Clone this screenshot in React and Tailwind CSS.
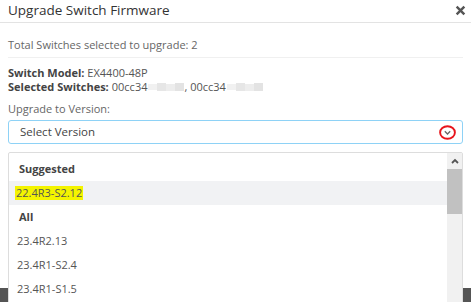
import { useState } from "react";

const versions = ["23.4R2.13", "23.4R1-S2.4", "23.4R1-S1.5"];

// pixelated blur placeholder for hidden serials
const Blur = () => (
  <span className="inline-flex items-center h-[8px] ml-[1px]">
    <span className="w-[9px] h-[6px] bg-[#f1f1f1]"></span>
    <span className="w-[9px] h-[8px] bg-[#e6e6e6]"></span>
    <span className="w-[9px] h-[7px] bg-[#ededed]"></span>
    <span className="w-[9px] h-[8px] bg-[#e3e3e3]"></span>
  </span>
);

const App = () => {
  const [open] = useState(true);

  return (
    <div
      className="relative w-[471px] h-[302px] overflow-hidden bg-white text-[#555]"
      style={{ fontFamily: "'Open Sans', 'Liberation Sans', sans-serif" }}
    >
      {/* HEADER */}
      <div className="flex items-center justify-between h-[23px] pl-[8px] pr-[5px] border-b border-[#e3e3e3]">
        <h2 className="text-[13.5px] leading-none text-[#333] -mt-[1px]">
          Upgrade Switch Firmware
        </h2>
        <svg width="11" height="11" viewBox="0 0 10 10" className="-mt-[1px]">
          <path d="M1.5 1.5 L8.5 8.5 M8.5 1.5 L1.5 8.5" stroke="#555" strokeWidth="2.2" />
        </svg>
      </div>

      {/* BODY */}
      <div className="px-[8px]">
        <p className="text-[11px] leading-none pt-[16px] pb-[7px] border-b border-[#f0f0f0] text-[#666]">
          Total Switches selected to upgrade: 2
        </p>
        <div className="text-[11px] leading-[14px] pt-[8px]">
          <p>
            <span className="font-bold text-[#444]">Switch Model:</span> EX4400-48P
          </p>
          <p className="flex items-center">
            <span className="font-bold text-[#444] mr-[3px]">Selected Switches:</span>
            00cc34
            <Blur />
            , 00cc34
            <Blur />
          </p>
        </div>
        <p className="text-[11px] leading-none pt-[9px] pb-[6px] text-[#666]">Upgrade to Version:</p>
        <div className="flex items-center justify-between h-[24px] border border-[#8ed2f6] rounded-[3px] pl-[11px] pr-[6px]">
          <span className="text-[11.5px] text-[#444]">Select Version</span>
          <svg width="17" height="15" viewBox="0 0 17 15">
            <ellipse cx="8.5" cy="7.5" rx="7.4" ry="6.3" fill="none" stroke="#e8141b" strokeWidth="1.9" />
            <path d="M5.8 6.3 L8.5 9 L11.2 6.3" fill="none" stroke="#666" strokeWidth="1.3" />
          </svg>
        </div>
        <div className="mt-[98px] border-t border-[#eeeeee]"></div>
      </div>
      <div className="mt-[45px] h-[20px] bg-[#555]"></div>

      {/* DROPDOWN */}
      {open && (
        <div className="absolute left-[8px] top-[152px] w-[455px] h-[160px] bg-white border border-[#dddddd] rounded-[2px] flex">
          <div className="flex-1 pt-[4px] text-[11px]">
            <div className="h-[24px] flex items-center pl-[10px] font-bold text-[#444]">Suggested</div>
            <div className="h-[24px] flex items-center pl-[6px] bg-[#f1f2f4]">
              <span className="bg-[#f4f400] text-[#555] px-[1px] leading-[14px]">22.4R3-S2.12</span>
            </div>
            <div className="h-[24px] flex items-center pl-[10px] font-bold text-[#444]">All</div>
            {versions.map((v) => (
              <div key={v} className="h-[24px] flex items-center pl-[8px]">
                {v}
              </div>
            ))}
          </div>
          <div className="w-[15px] bg-[#f1f1f1] flex flex-col">
            <div className="h-[16px] flex items-center justify-center">
              <svg width="8" height="6" viewBox="0 0 8 6">
                <path d="M1 5 L4 2 L7 5" fill="none" stroke="#555" strokeWidth="1.8" />
              </svg>
            </div>
            <div className="h-[45px] bg-[#c1c1c1]"></div>
          </div>
        </div>
      )}
    </div>
  );
};

export default App;
